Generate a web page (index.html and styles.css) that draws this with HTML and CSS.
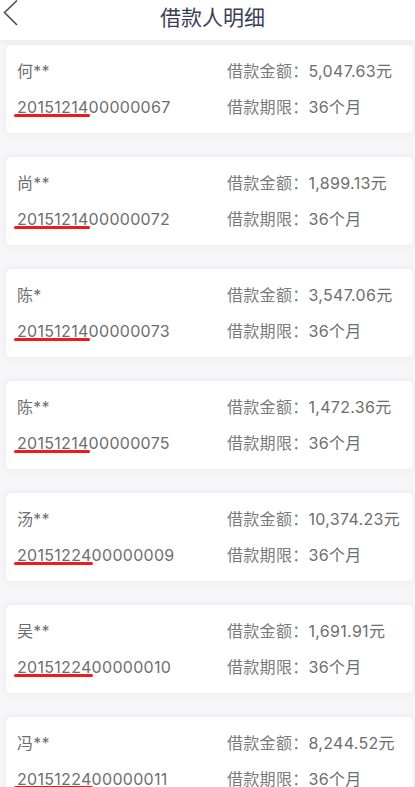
FILE: index.html
```html
<!DOCTYPE html>
<html lang="zh-CN">
<head>
    <meta charset="UTF-8">
    <meta name="viewport" content="width=device-width, initial-scale=1.0">
    <title>借款人明细</title>
    <link rel="stylesheet" href="styles.css">
</head>
<body>
<header class="topbar">
    <a class="back" href="#">
        <svg width="16" height="27" viewBox="0 0 16 27">
            <polyline points="14,0.5 1.5,12.5 14,25" fill="none" stroke="#4a4a4a" stroke-width="1.5"/>
        </svg>
    </a>
    <h1 class="title">借款人明细</h1>
    <span></span>
</header>

<div class="list">
    <div class="card">
        <div class="name">何**</div>
        <div class="info"><span class="label">借款金额：</span>5,047.63元</div>
        <div class="code"><span class="mark">20151214</span>00000067</div>
        <div class="info"><span class="label">借款期限：</span>36个月</div>
    </div>
    <div class="card">
        <div class="name">尚**</div>
        <div class="info"><span class="label">借款金额：</span>1,899.13元</div>
        <div class="code"><span class="mark">20151214</span>00000072</div>
        <div class="info"><span class="label">借款期限：</span>36个月</div>
    </div>
    <div class="card">
        <div class="name">陈*</div>
        <div class="info"><span class="label">借款金额：</span>3,547.06元</div>
        <div class="code"><span class="mark">20151214</span>00000073</div>
        <div class="info"><span class="label">借款期限：</span>36个月</div>
    </div>
    <div class="card">
        <div class="name">陈**</div>
        <div class="info"><span class="label">借款金额：</span>1,472.36元</div>
        <div class="code"><span class="mark">20151214</span>00000075</div>
        <div class="info"><span class="label">借款期限：</span>36个月</div>
    </div>
    <div class="card">
        <div class="name">汤**</div>
        <div class="info"><span class="label">借款金额：</span>10,374.23元</div>
        <div class="code"><span class="mark">20151224</span>00000009</div>
        <div class="info"><span class="label">借款期限：</span>36个月</div>
    </div>
    <div class="card">
        <div class="name">吴**</div>
        <div class="info"><span class="label">借款金额：</span>1,691.91元</div>
        <div class="code"><span class="mark">20151224</span>00000010</div>
        <div class="info"><span class="label">借款期限：</span>36个月</div>
    </div>
    <div class="card">
        <div class="name">冯**</div>
        <div class="info"><span class="label">借款金额：</span>8,244.52元</div>
        <div class="code"><span class="mark">20151224</span>00000011</div>
        <div class="info"><span class="label">借款期限：</span>36个月</div>
    </div>
</div>
</body>
</html>
```

FILE: styles.css
```css
body {
    margin: 0;
    padding: 0;
    background-color: #f6f6f9;
    font-family: Inter, "Noto Sans CJK SC", sans-serif;
    color: #6e6e6e;
}

.topbar {
    display: grid;
    grid-template-columns: 30px 1fr 20px;
    align-items: start;
    height: 40px;
    background: #fff;
    box-shadow: 0 2px 5px rgba(60, 60, 120, 0.06);
}

.back {
    display: flex;
    padding-left: 3px;
}

.title {
    margin: 0;
    line-height: 32px;
    text-align: center;
    font-size: 21px;
    font-weight: normal;
    color: #3b3e58;
    font-family: "Noto Sans CJK SC", sans-serif;
}

.list {
    display: flex;
    flex-direction: column;
    gap: 24px;
    padding: 5px 2px 24px 6px;
}

.card {
    display: grid;
    grid-template-columns: 210px 1fr;
    row-gap: 12px;
    padding: 14px 0 14px 11px;
    background: #fff;
    border-radius: 5px;
    box-shadow: 0 0 6px rgba(60, 60, 100, 0.07);
    font-size: 16px;
    line-height: 24px;
    letter-spacing: 0.3px;
}

.label {
    color: #7a7a7a;
}

.mark {
    position: relative;
}

.mark::after {
    content: "";
    position: absolute;
    left: -3px;
    right: -1px;
    bottom: 0;
    height: 3px;
    border-radius: 2px;
    background: #f01a1a;
}
```
